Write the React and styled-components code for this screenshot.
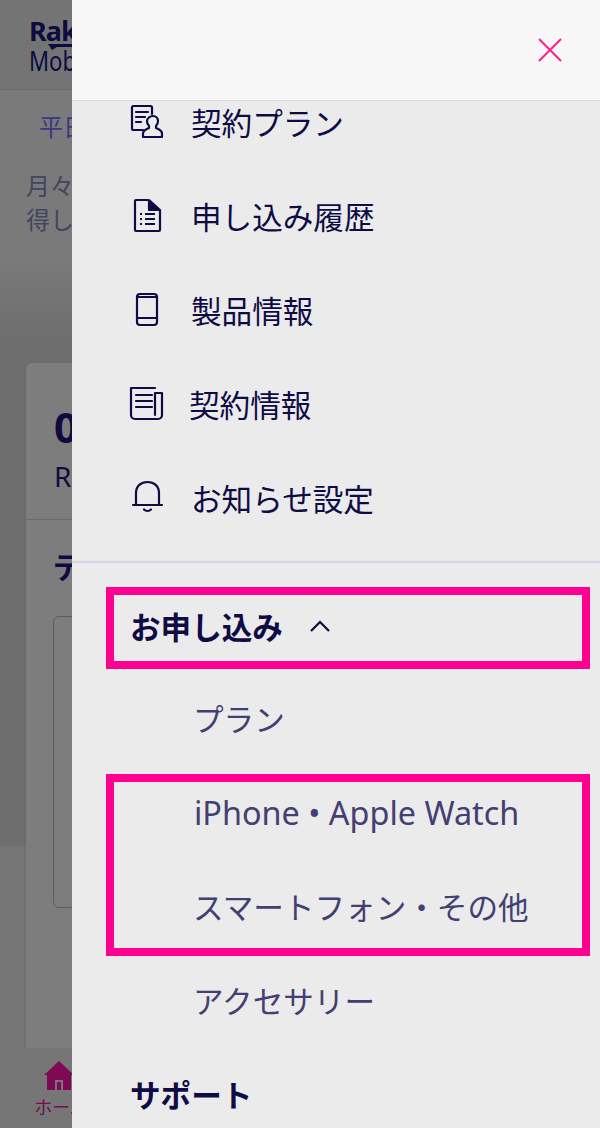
import styled, { createGlobalStyle } from 'styled-components';

const GlobalStyle = createGlobalStyle`
    html, body {
        margin: 0;
        padding: 0;
    }
    body {
        font-family: "Noto Sans", "Noto Sans CJK JP", sans-serif;
    }
`;

const topItems = [
    { label: '契約プラン', icon: <PlanIcon /> },
    { label: '申し込み履歴', icon: <HistoryIcon /> },
    { label: '製品情報', icon: <PhoneIcon /> },
    { label: '契約情報', icon: <NewsIcon />, tight: true },
    { label: 'お知らせ設定', icon: <BellIcon /> },
];

function PlanIcon() {
    return (
        <svg width="36" height="36" viewBox="0 0 36 36" fill="none" stroke="#0f0b45" strokeWidth="2.2" strokeLinejoin="round" strokeLinecap="round">
            <path d="M14 26H4.500a1.500 1.500 0 0 1-1.500-1.500V3.500A1.500 1.500 0 0 1 4.500 2h17A1.500 1.500 0 0 1 23 3.500V10" />
            <path d="M7 8h12M7 13h9M7 18h5" />
            <path d="M24 12c3 0 5 2.300 5 5.200 0 2.300-1 3.800-2 4.800v2c2 1 6 2 6 5.500V33H14v-3.500c0-3.500 4-4.500 6-5.500v-2c-1-1-2-2.500-2-4.800 0-2.900 3-5.200 6-5.200z" />
        </svg>
    );
}

function HistoryIcon() {
    return (
        <svg width="36" height="36" viewBox="0 0 36 36" fill="none" stroke="#0f0b45" strokeWidth="2.2" strokeLinejoin="round">
            <path d="M19 2H7a1 1 0 0 0-1 1v29a1 1 0 0 0 1 1h23a1 1 0 0 0 1-1V12" />
            <path d="M20 2l11 10H20z" fill="#0f0b45" />
            <path d="M11 16h2M16 16h10M11 21h2M16 21h10M11 26h2M16 26h10" />
        </svg>
    );
}

function PhoneIcon() {
    return (
        <svg width="36" height="36" viewBox="0 0 36 36" fill="none" stroke="#0f0b45" strokeWidth="2.2" strokeLinejoin="round">
            <rect x="8" y="2" width="20" height="31" rx="3" />
            <path d="M8 5h20M8 26h20" />
        </svg>
    );
}

function NewsIcon() {
    return (
        <svg width="36" height="36" viewBox="0 0 36 36" fill="none" stroke="#0f0b45" strokeWidth="2.2" strokeLinejoin="round" strokeLinecap="round">
            <path d="M27 2H3v27a4 4 0 0 0 4 4h23a4 4 0 0 0 4-4V7h-7v22" />
            <path d="M8 9h16M8 15h16M8 21h16" />
        </svg>
    );
}

function BellIcon() {
    return (
        <svg width="36" height="36" viewBox="0 0 36 36" fill="none" stroke="#0f0b45" strokeWidth="2.2" strokeLinejoin="round" strokeLinecap="round">
            <path d="M4 25h29M7 25V13C7 6 12 2 18.500 2S30 6 30 13v12" />
            <path d="M15 29.500c2 2 5 2 7 0" />
        </svg>
    );
}

export default function App() {
    return (
        <Screen>
            <GlobalStyle />
            <Underlay>
                <TopBar>
                    <LogoMain>Rakuten</LogoMain>
                    <svg width="44" height="6" viewBox="0 0 44 6" fill="#1e1680">
                        <path d="M0 0h44v3H9L4 6z" />
                    </svg>
                    <LogoSub>Mobile</LogoSub>
                </TopBar>
                <Notice>
                    <Hours>平日の営業時間</Hours>
                    <Lead>月々のご利用料金<br />得しています</Lead>
                </Notice>
                <Content>
                    <Card>
                        <CardHead>
                            <Phone>090</Phone>
                            <PlanName>Rakuten</PlanName>
                        </CardHead>
                        <CardBody>
                            <CardTitle>データ</CardTitle>
                            <InnerBox />
                        </CardBody>
                    </Card>
                </Content>
                <BottomNav>
                    <NavItem>
                        <svg width="30" height="29" viewBox="0 0 30 29" fill="#ff14a8" fillRule="evenodd">
                            <path d="M15 0L0 14h3v15h24V14h3zM11 19h8v10h-2v-8h-4v8h-2z" />
                        </svg>
                        <NavLabel>ホーム</NavLabel>
                    </NavItem>
                </BottomNav>
            </Underlay>
            <Scrim />
            <Drawer>
                <DrawerHead>
                    <svg width="26" height="26" viewBox="0 0 26 26" stroke="#ff1f8e" strokeWidth="2">
                        <path d="M2 2l22 22M24 2L2 24" />
                    </svg>
                </DrawerHead>
                <Menu>
                    {topItems.map((item) => {
                        return (
                            <MenuRow key={item.label}>
                                <IconSlot $tight={item.tight}>{item.icon}</IconSlot>
                                {item.label}
                            </MenuRow>
                        );
                    })}
                    <Divider />
                    <Marked $top={7} $bottom={3}>
                        <SectionTitle $compact>
                            お申し込み
                            <svg width="22" height="14" viewBox="0 0 22 14" fill="none" stroke="#0f0b45" strokeWidth="2.2">
                                <path d="M2 12l9-9 9 9" />
                            </svg>
                        </SectionTitle>
                    </Marked>
                    <SubRow>プラン</SubRow>
                    <Marked $top={9} $bottom={-3}>
                        <SubRow $latin>iPhone • Apple Watch</SubRow>
                        <SubRow>スマートフォン・その他</SubRow>
                    </Marked>
                    <SubRow>アクセサリー</SubRow>
                    <SectionTitle>サポート</SectionTitle>
                </Menu>
            </Drawer>
        </Screen>
    );
}

const Screen = styled.div`
    position: relative;
    width: 600px;
    height: 1128px;
    overflow: hidden;
    background: #ffffff;
`;

const Underlay = styled.div`
    width: 600px;
    height: 1128px;
    display: flex;
    flex-direction: column;
    color: #1e1680;
`;

const TopBar = styled.div`
    height: 90px;
    flex-shrink: 0;
    display: flex;
    flex-direction: column;
    background: #e8e8e8;
    border-bottom: 1px solid #d8d8d8;
    box-sizing: border-box;
    padding: 18px 0 0 29px;

    svg {
        margin-left: 19px;
    }
`;

const LogoMain = styled.span`
    font-size: 27px;
    line-height: 26px;
    font-weight: 700;
    letter-spacing: -1px;
`;

const LogoSub = styled.span`
    font-size: 27px;
    line-height: 22px;
    transform: scaleX(0.82);
    transform-origin: left center;
`;

const Notice = styled.div`
    height: 172px;
    flex-shrink: 0;
    background: #f4f4f4;
    padding-left: 26px;
`;

const Hours = styled.div`
    font-size: 24px;
    line-height: 32px;
    margin-top: 21px;
    margin-left: 13px;
    color: #7870ff;
    white-space: nowrap;
`;

const Lead = styled.div`
    font-size: 24px;
    line-height: 34px;
    margin-top: 26px;
    color: #8a88c0;
    white-space: nowrap;
`;

const Content = styled.div`
    flex: 1;
    background: linear-gradient(#f2f2f2 0, #dcdcdc 78px, #dcdcdc 584px, #ececec 584px);
    padding: 101px 0 0 26px;
    display: flex;
`;

const Card = styled.div`
    width: 560px;
    background: #fafafa;
    border-radius: 6px 6px 0 0;
    box-shadow: 0 0 3px #c8c8c8;
`;

const CardHead = styled.div`
    height: 157px;
    box-sizing: border-box;
    padding: 41px 0 0 28px;
    border-bottom: 1px solid #d4d4d4;
`;

const Phone = styled.div`
    font-size: 42px;
    line-height: 46px;
    font-weight: 700;
`;

const PlanName = styled.div`
    font-size: 28px;
    line-height: 36px;
    margin-top: 8px;
`;

const CardBody = styled.div`
    padding: 26px 0 0 27px;
`;

const CardTitle = styled.div`
    font-size: 30px;
    line-height: 42px;
    font-weight: 700;
`;

const InnerBox = styled.div`
    width: 500px;
    height: 292px;
    margin-top: 28px;
    box-sizing: border-box;
    border: 1px solid #bdbdbd;
    border-radius: 6px;
`;

const BottomNav = styled.div`
    height: 80px;
    flex-shrink: 0;
    background: #ededed;
    padding-left: 32px;
`;

const NavItem = styled.div`
    width: 54px;
    display: flex;
    flex-direction: column;
    align-items: center;
    padding-top: 13px;
`;

const NavLabel = styled.span`
    font-size: 18px;
    line-height: 26px;
    margin: 4px 0 0 4px;
    color: #e81a9c;
    white-space: nowrap;
`;

const Scrim = styled.div`
    position: absolute;
    inset: 0;
    background: rgba(0, 0, 0, 0.5);
`;

const Drawer = styled.div`
    position: absolute;
    top: 0;
    right: 0;
    bottom: 0;
    width: 528px;
    background: #ebebeb;
    overflow: hidden;
`;

const DrawerHead = styled.div`
    position: relative;
    z-index: 1;
    height: 101px;
    box-sizing: border-box;
    background: #f7f7f7;
    border-bottom: 1px solid #dcdcdc;
    display: flex;
    justify-content: flex-end;
    align-items: center;
    padding-right: 37px;
`;

const Menu = styled.div`
    margin-top: -26px;
    display: flex;
    flex-direction: column;
`;

const MenuRow = styled.div`
    height: 94px;
    display: flex;
    align-items: center;
    flex-shrink: 0;
    padding-left: 57px;
    font-size: 30.6px;
    color: #0f0b45;
    white-space: nowrap;
`;

const IconSlot = styled.span`
    width: 36px;
    height: 36px;
    margin-right: ${(props) => (props.$tight ? '25px' : '26px')};
    margin-left: ${(props) => (props.$tight ? '-1px' : '0')};
    display: flex;
`;

const Divider = styled.div`
    height: 2px;
    margin: 16px 0 17px;
    background: #d6d3e2;
`;

const Marked = styled.div`
    position: relative;

    &::after {
        content: "";
        position: absolute;
        left: 34px;
        right: 10px;
        top: ${(props) => props.$top}px;
        bottom: ${(props) => props.$bottom}px;
        border: 8px solid #ff0090;
    }
`;

const SectionTitle = styled.div`
    height: ${(props) => (props.$compact ? '91.5px' : '93.8px')};
    flex-shrink: 0;
    display: flex;
    align-items: center;
    gap: 26px;
    padding-left: 58px;
    font-size: 30.6px;
    font-weight: 700;
    color: #0f0b45;
`;

const SubRow = styled.div`
    height: 93.8px;
    display: flex;
    align-items: center;
    flex-shrink: 0;
    padding-left: ${(props) => (props.$latin ? '122px' : '121px')};
    font-size: ${(props) => (props.$latin ? '32.4px' : '30.6px')};
    color: #443f72;
    white-space: nowrap;
`;
